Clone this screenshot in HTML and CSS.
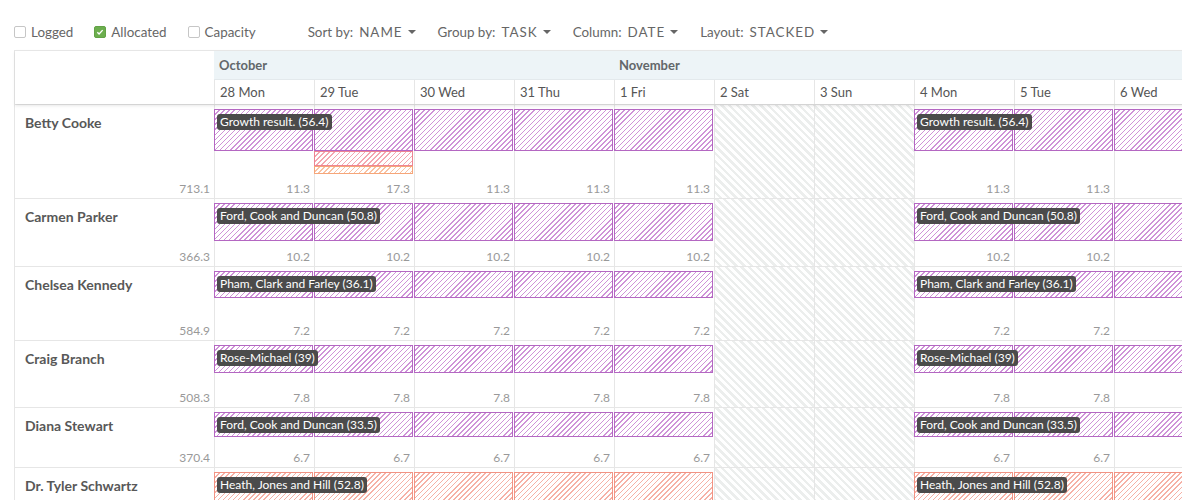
FILE: index.html
```html
<!DOCTYPE html>
<html lang="en">
<head>
    <meta charset="UTF-8">
    <title>Resource Planner</title>
    <link rel="stylesheet" href="styles.css">
</head>
<body>

    <!-- Toolbar -->
    <div class="toolbar">
        <label class="check"><span class="box"></span>Logged</label>
        <label class="check"><span class="box on"><svg viewBox="0 0 12 12"><path d="M2.8 6.2l2.1 2.1 4.3-4.6"/></svg></span>Allocated</label>
        <label class="check"><span class="box"></span>Capacity</label>
        <div class="select sort">Sort by: <b>NAME</b><i class="caret"></i></div>
        <div class="select">Group by: <b>TASK</b><i class="caret"></i></div>
        <div class="select">Column: <b>DATE</b><i class="caret"></i></div>
        <div class="select">Layout: <b>STACKED</b><i class="caret"></i></div>
    </div>

    <div class="planner">
        <!-- Header -->
        <div class="head">
            <div class="corner"></div>
            <div class="timeline">
                <div class="months">
                    <div class="month span-4">October</div>
                    <div class="month">November</div>
                </div>
                <div class="days">
                    <div class="day">28 Mon</div>
                    <div class="day">29 Tue</div>
                    <div class="day">30 Wed</div>
                    <div class="day">31 Thu</div>
                    <div class="day">1 Fri</div>
                    <div class="day">2 Sat</div>
                    <div class="day">3 Sun</div>
                    <div class="day">4 Mon</div>
                    <div class="day">5 Tue</div>
                    <div class="day">6 Wed</div>
                </div>
            </div>
        </div>

        <!-- Betty Cooke -->
        <div class="row" style="height:94px">
            <div class="person"><span class="name">Betty Cooke</span><span class="total">713.1</span></div>
            <div class="cell"><div class="bar" style="height:42px"><span class="tag">Growth result. (56.4)</span></div><span class="val">11.3</span></div>
            <div class="cell"><div class="bar" style="height:42px"></div><div class="bar red" style="height:15px"></div><div class="bar orange" style="height:8px"></div><span class="val">17.3</span></div>
            <div class="cell"><div class="bar" style="height:42px"></div><span class="val">11.3</span></div>
            <div class="cell"><div class="bar" style="height:42px"></div><span class="val">11.3</span></div>
            <div class="cell"><div class="bar" style="height:42px"></div><span class="val">11.3</span></div>
            <div class="cell weekend"></div>
            <div class="cell weekend"></div>
            <div class="cell"><div class="bar" style="height:42px"><span class="tag">Growth result. (56.4)</span></div><span class="val">11.3</span></div>
            <div class="cell"><div class="bar" style="height:42px"></div><span class="val">11.3</span></div>
            <div class="cell"><div class="bar" style="height:42px"></div></div>
        </div>

        <!-- Carmen Parker -->
        <div class="row" style="height:68px">
            <div class="person"><span class="name">Carmen Parker</span><span class="total">366.3</span></div>
            <div class="cell"><div class="bar" style="height:38px"><span class="tag">Ford, Cook and Duncan (50.8)</span></div><span class="val">10.2</span></div>
            <div class="cell"><div class="bar" style="height:38px"></div><span class="val">10.2</span></div>
            <div class="cell"><div class="bar" style="height:38px"></div><span class="val">10.2</span></div>
            <div class="cell"><div class="bar" style="height:38px"></div><span class="val">10.2</span></div>
            <div class="cell"><div class="bar" style="height:38px"></div><span class="val">10.2</span></div>
            <div class="cell weekend"></div>
            <div class="cell weekend"></div>
            <div class="cell"><div class="bar" style="height:38px"><span class="tag">Ford, Cook and Duncan (50.8)</span></div><span class="val">10.2</span></div>
            <div class="cell"><div class="bar" style="height:38px"></div><span class="val">10.2</span></div>
            <div class="cell"><div class="bar" style="height:38px"></div></div>
        </div>

        <!-- Chelsea Kennedy -->
        <div class="row" style="height:74px">
            <div class="person"><span class="name">Chelsea Kennedy</span><span class="total">584.9</span></div>
            <div class="cell"><div class="bar" style="height:27px"><span class="tag">Pham, Clark and Farley (36.1)</span></div><span class="val">7.2</span></div>
            <div class="cell"><div class="bar" style="height:27px"></div><span class="val">7.2</span></div>
            <div class="cell"><div class="bar" style="height:27px"></div><span class="val">7.2</span></div>
            <div class="cell"><div class="bar" style="height:27px"></div><span class="val">7.2</span></div>
            <div class="cell"><div class="bar" style="height:27px"></div><span class="val">7.2</span></div>
            <div class="cell weekend"></div>
            <div class="cell weekend"></div>
            <div class="cell"><div class="bar" style="height:27px"><span class="tag">Pham, Clark and Farley (36.1)</span></div><span class="val">7.2</span></div>
            <div class="cell"><div class="bar" style="height:27px"></div><span class="val">7.2</span></div>
            <div class="cell"><div class="bar" style="height:27px"></div></div>
        </div>

        <!-- Craig Branch -->
        <div class="row" style="height:67px">
            <div class="person"><span class="name">Craig Branch</span><span class="total">508.3</span></div>
            <div class="cell"><div class="bar" style="height:28px"><span class="tag">Rose-Michael (39)</span></div><span class="val">7.8</span></div>
            <div class="cell"><div class="bar" style="height:28px"></div><span class="val">7.8</span></div>
            <div class="cell"><div class="bar" style="height:28px"></div><span class="val">7.8</span></div>
            <div class="cell"><div class="bar" style="height:28px"></div><span class="val">7.8</span></div>
            <div class="cell"><div class="bar" style="height:28px"></div><span class="val">7.8</span></div>
            <div class="cell weekend"></div>
            <div class="cell weekend"></div>
            <div class="cell"><div class="bar" style="height:28px"><span class="tag">Rose-Michael (39)</span></div><span class="val">7.8</span></div>
            <div class="cell"><div class="bar" style="height:28px"></div><span class="val">7.8</span></div>
            <div class="cell"><div class="bar" style="height:28px"></div></div>
        </div>

        <!-- Diana Stewart -->
        <div class="row" style="height:60px">
            <div class="person"><span class="name">Diana Stewart</span><span class="total">370.4</span></div>
            <div class="cell"><div class="bar" style="height:25px"><span class="tag">Ford, Cook and Duncan (33.5)</span></div><span class="val">6.7</span></div>
            <div class="cell"><div class="bar" style="height:25px"></div><span class="val">6.7</span></div>
            <div class="cell"><div class="bar" style="height:25px"></div><span class="val">6.7</span></div>
            <div class="cell"><div class="bar" style="height:25px"></div><span class="val">6.7</span></div>
            <div class="cell"><div class="bar" style="height:25px"></div><span class="val">6.7</span></div>
            <div class="cell weekend"></div>
            <div class="cell weekend"></div>
            <div class="cell"><div class="bar" style="height:25px"><span class="tag">Ford, Cook and Duncan (33.5)</span></div><span class="val">6.7</span></div>
            <div class="cell"><div class="bar" style="height:25px"></div><span class="val">6.7</span></div>
            <div class="cell"><div class="bar" style="height:25px"></div></div>
        </div>

        <!-- Dr. Tyler Schwartz -->
        <div class="row last">
            <div class="person"><span class="name">Dr. Tyler Schwartz</span></div>
            <div class="cell"><div class="bar salmon" style="height:39px"><span class="tag">Heath, Jones and Hill (52.8)</span></div></div>
            <div class="cell"><div class="bar salmon" style="height:39px"></div></div>
            <div class="cell"><div class="bar salmon" style="height:39px"></div></div>
            <div class="cell"><div class="bar salmon" style="height:39px"></div></div>
            <div class="cell"><div class="bar salmon" style="height:39px"></div></div>
            <div class="cell weekend"></div>
            <div class="cell weekend"></div>
            <div class="cell"><div class="bar salmon" style="height:39px"><span class="tag">Heath, Jones and Hill (52.8)</span></div></div>
            <div class="cell"><div class="bar salmon" style="height:39px"></div></div>
            <div class="cell"><div class="bar salmon" style="height:39px"></div></div>
        </div>
    </div>

</body>
</html>
```

FILE: styles.css
```css
/* General */
body {
    margin: 0;
    width: 1182px;
    height: 500px;
    overflow: hidden;
    background: #fff;
    color: #555;
    font-family: Lato, "Noto Sans", sans-serif;
}

/* Toolbar */
.toolbar {
    display: flex;
    align-items: center;
    height: 50px;
    box-sizing: border-box;
    padding: 14px 0 0 14px;
    font-size: 13.4px;
    color: #666;
    white-space: nowrap;
}

.check {
    display: flex;
    align-items: center;
    gap: 5px;
    margin-right: 21px;
}

.box {
    width: 12px;
    height: 12px;
    box-sizing: border-box;
    border: 1px solid #c6c6c6;
    border-radius: 2px;
    display: flex;
}

.box.on {
    background: #6cae4e;
    border-color: #62a246;
}

.box svg {
    width: 10px;
    height: 10px;
}

.box svg path {
    fill: none;
    stroke: #fff;
    stroke-width: 1.6;
}

.select {
    display: flex;
    align-items: center;
    margin-right: 22px;
}

.select.sort {
    margin-left: 31px;
}

.select b {
    font-weight: normal;
    letter-spacing: 1px;
    margin-left: 6px;
}

.caret {
    width: 0;
    height: 0;
    margin-left: 5px;
    border-left: 4px solid transparent;
    border-right: 4px solid transparent;
    border-top: 4px solid #666;
}

/* Planner grid */
.planner {
    margin-left: 14px;
    width: 1200px;
    border-left: 1px solid #e6e6e6;
}

.head {
    display: flex;
    border-top: 1px solid #e6e6e6;
    position: relative;
    z-index: 3;
    background: #fff;
    box-shadow: 0 2px 3px rgba(0, 0, 0, 0.09);
}

.corner {
    width: 199px;
    flex: none;
}

.timeline {
    flex: 1;
}

.months {
    display: flex;
    height: 28px;
    background: #edf4f7;
}

.month {
    flex: 1;
    padding-left: 5px;
    line-height: 28px;
    font-size: 13px;
    font-weight: bold;
    color: #62676a;
}

.month.span-4 {
    flex: none;
    width: 395px;
}

.days {
    display: flex;
    height: 25px;
    box-sizing: border-box;
    border-top: 1px solid #e3e9ec;
}

.day {
    width: 100px;
    flex: none;
    box-sizing: border-box;
    border-left: 1px solid #e6e6e6;
    padding-left: 5px;
    line-height: 24px;
    font-size: 13px;
    color: #555;
}

/* Rows */
.row {
    display: flex;
    box-sizing: border-box;
    border-top: 1px solid #e6e6e6;
}

.row.last {
    height: 70px;
}

.person {
    width: 199px;
    flex: none;
    box-sizing: border-box;
    display: flex;
    flex-direction: column;
    padding: 9px 4px 2px 10px;
}

.name {
    font-size: 14px;
    font-weight: bold;
    color: #585858;
    line-height: 17px;
}

.total, .val {
    margin-top: auto;
    text-align: right;
    font-size: 12px;
    line-height: 14px;
    color: #999;
}

.cell {
    width: 100px;
    flex: none;
    box-sizing: border-box;
    border-left: 1px solid #e6e6e6;
    display: flex;
    flex-direction: column;
    padding: 4px 0 2px;
}

.val {
    padding-right: 4px;
}

.weekend {
    background: repeating-linear-gradient(45deg, #fff 0 3px, #eceeed 3px 5.5px);
}

/* Bars */
.bar {
    position: relative;
    flex: none;
    width: 99px;
    margin-left: -1px;
    box-sizing: border-box;
    border: 1px solid #b467c2;
    background: repeating-linear-gradient(135deg, #fff 0 2.6px, #cf93d8 2.6px 3.6px);
}

.bar.red {
    border-color: #ee8593;
    background: repeating-linear-gradient(135deg, #fff 0 2.6px, #f4a7b0 2.6px 3.6px);
}

.bar.orange {
    border-color: #f6a67a;
    background: repeating-linear-gradient(135deg, #fff 0 2.6px, #f9c2a2 2.6px 3.6px);
}

.bar.salmon {
    border-color: #f29383;
    background: repeating-linear-gradient(135deg, #fff 0 2.6px, #f6b1a6 2.6px 3.6px);
}

.tag {
    position: absolute;
    top: 4px;
    left: 2px;
    z-index: 2;
    padding: 0 3px;
    border-radius: 3px;
    background: #4b4b4b;
    color: #fff;
    font-size: 12px;
    line-height: 16px;
    white-space: nowrap;
}
```
